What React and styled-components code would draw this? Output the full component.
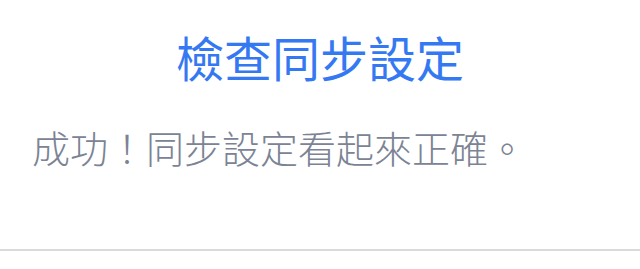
import React from "react";
import styled, { createGlobalStyle } from "styled-components";

const Global = createGlobalStyle`
  html, body { margin: 0; padding: 0; background: #ffffff; }
  body { font-family: "Noto Sans CJK TC", "Noto Sans", sans-serif; }
`;

const Panel = styled.div`
  width: 640px;
  height: 269px;
  display: flex;
  flex-direction: column;
  box-sizing: border-box;
`;

const Content = styled.div`
  padding: 27px 32px 0 32px;
  height: 251px;
  box-sizing: border-box;
  border-bottom: 2px solid #dadada;
  display: flex;
  flex-direction: column;
`;

const Title = styled.h1`
  margin: 0;
  font-size: 48px;
  line-height: 58px;
  font-weight: 400;
  color: #3479f2;
  text-align: center;
`;

const Message = styled.p`
  margin: 39px 0 0 0;
  font-size: 38px;
  line-height: 46px;
  font-weight: 300;
  color: #7b8394;
`;

export default function App() {
  return (
    <>
      <Global />
      <Panel>
        <Content>
          <Title>檢查同步設定</Title>
          <Message>成功！同步設定看起來正確。</Message>
        </Content>
      </Panel>
    </>
  );
}
